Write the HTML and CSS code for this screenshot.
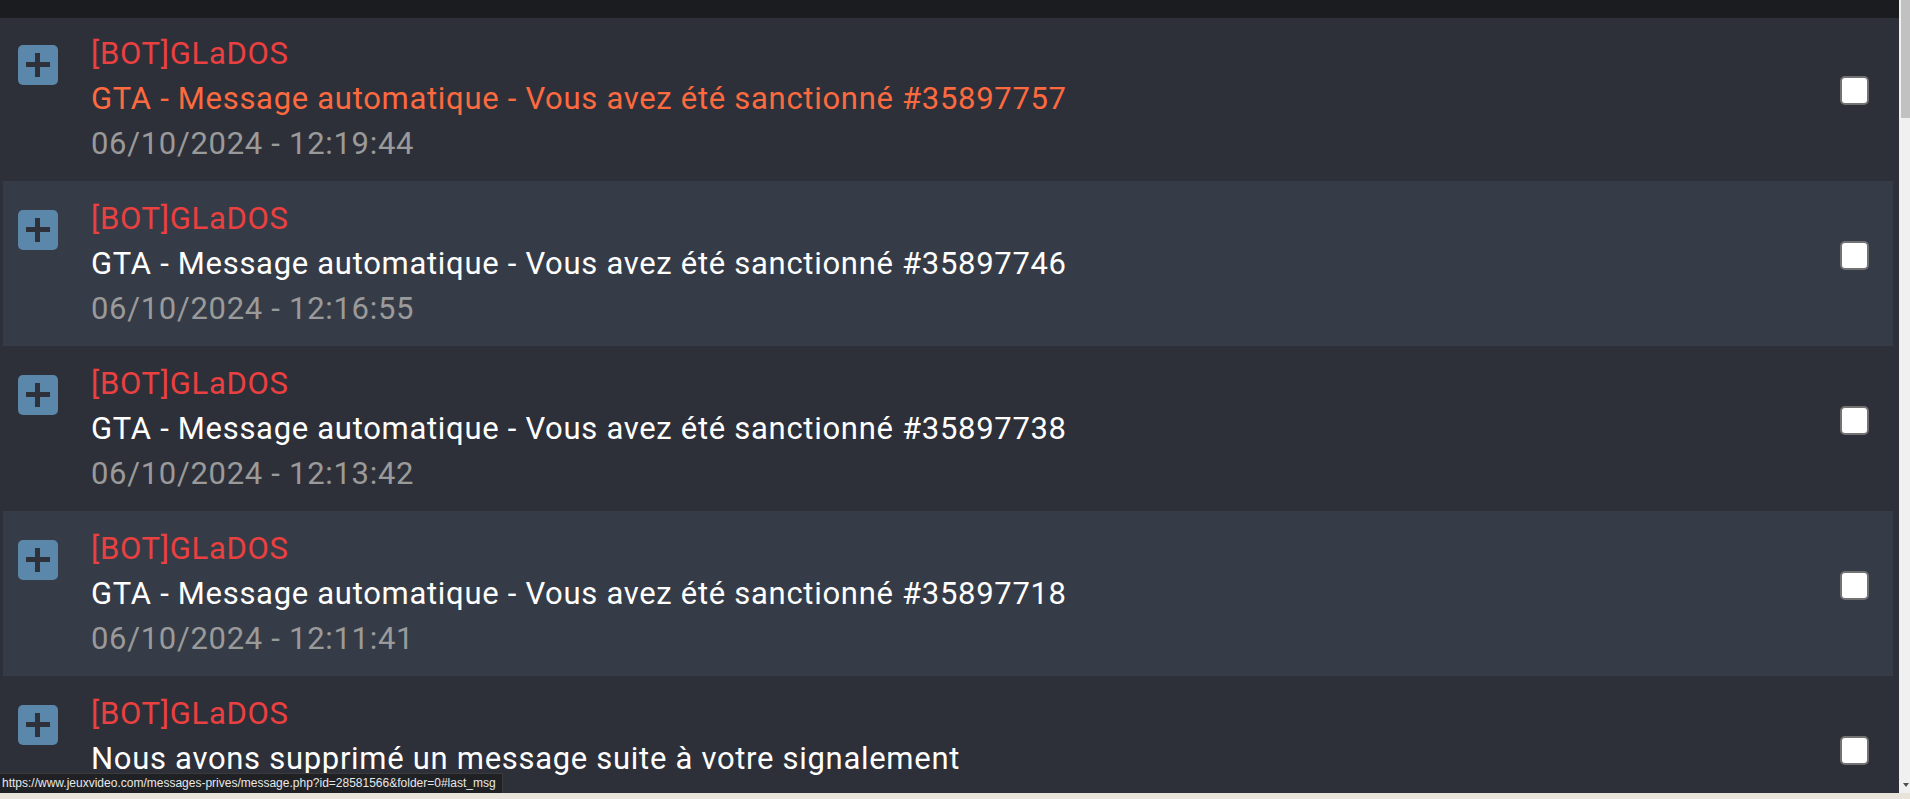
FILE: index.html
```html
<!DOCTYPE html>
<html lang="fr">
<head>
    <meta charset="UTF-8">
    <meta name="viewport" content="width=device-width, initial-scale=1.0">
    <title>Messages privés</title>
    <link rel="stylesheet" href="styles.css">
</head>
<body>
    <div class="screen">
        <div class="viewport">
            <div class="page">
                <div class="topbar"></div>

                <!-- Liste des messages privés -->
                <ul class="msg-list">
                    <li class="msg unread">
                        <span class="msg-toggle"></span>
                        <div class="msg-body">
                            <div class="msg-author">[BOT]GLaDOS</div>
                            <div class="msg-subject">GTA - Message automatique - Vous avez été sanctionné #35897757</div>
                            <div class="msg-date">06/10/2024 - 12:19:44</div>
                        </div>
                        <input type="checkbox" class="msg-check">
                    </li>
                    <li class="msg">
                        <span class="msg-toggle"></span>
                        <div class="msg-body">
                            <div class="msg-author">[BOT]GLaDOS</div>
                            <div class="msg-subject">GTA - Message automatique - Vous avez été sanctionné #35897746</div>
                            <div class="msg-date">06/10/2024 - 12:16:55</div>
                        </div>
                        <input type="checkbox" class="msg-check">
                    </li>
                    <li class="msg">
                        <span class="msg-toggle"></span>
                        <div class="msg-body">
                            <div class="msg-author">[BOT]GLaDOS</div>
                            <div class="msg-subject">GTA - Message automatique - Vous avez été sanctionné #35897738</div>
                            <div class="msg-date">06/10/2024 - 12:13:42</div>
                        </div>
                        <input type="checkbox" class="msg-check">
                    </li>
                    <li class="msg">
                        <span class="msg-toggle"></span>
                        <div class="msg-body">
                            <div class="msg-author">[BOT]GLaDOS</div>
                            <div class="msg-subject">GTA - Message automatique - Vous avez été sanctionné #35897718</div>
                            <div class="msg-date">06/10/2024 - 12:11:41</div>
                        </div>
                        <input type="checkbox" class="msg-check">
                    </li>
                    <li class="msg">
                        <span class="msg-toggle"></span>
                        <div class="msg-body">
                            <div class="msg-author">[BOT]GLaDOS</div>
                            <div class="msg-subject">Nous avons supprimé un message suite à votre signalement</div>
                            <div class="msg-date">06/10/2024 - 11:58:12</div>
                        </div>
                        <input type="checkbox" class="msg-check">
                    </li>
                </ul>
            </div>

            <!-- fake scrollbar -->
            <div class="scrollbar">
                <div class="scroll-thumb"></div>
                <div class="scroll-arrow"></div>
            </div>
        </div>
        <div class="bottom-strip"></div>

        <div class="status-url">https://www.jeuxvideo.com/messages-prives/message.php?id=28581566&amp;folder=0#last_msg</div>
    </div>
</body>
</html>
```

FILE: styles.css
```css
/* Base */
body {
    margin: 0;
    padding: 0;
    background-color: #2e3039;
    font-family: Roboto, 'Noto Sans', sans-serif;
    overflow: hidden;
}

.screen {
    position: relative;
    width: 1910px;
    height: 799px;
    display: flex;
    flex-direction: column;
}

.viewport {
    display: flex;
    height: 793px;
    overflow: hidden;
}

.page {
    flex: 1;
    background-color: #2e3039;
    overflow: hidden;
}

.topbar {
    height: 18px;
    background-color: #1b1c1f;
}

/* Message list */
.msg-list {
    list-style: none;
    margin: 0;
    padding: 0 6px 0 3px;
}

.msg {
    display: flex;
    align-items: flex-start;
    height: 165px;
    box-sizing: border-box;
    padding: 15px 24px 15px 15px;
    background-color: #2e3039;
}

.msg:first-child {
    height: 163px;
    padding-top: 13px;
}

.msg:nth-child(even) {
    background-color: #363c47;
}

.msg-toggle {
    position: relative;
    flex: none;
    width: 40px;
    height: 40px;
    margin-top: 14px;
    margin-right: 33px;
    border-radius: 5px;
    background-color: #5b87ab;
}

/* plus sign */
.msg-toggle::before,
.msg-toggle::after {
    content: '';
    position: absolute;
    background-color: #2e3139;
}

.msg-toggle::before {
    left: 8px;
    top: 17px;
    width: 24px;
    height: 5px;
}

.msg-toggle::after {
    left: 17px;
    top: 8px;
    width: 5px;
    height: 24px;
}

.msg-body {
    flex: 1;
    font-size: 31px;
    line-height: 45px;
    letter-spacing: 0.7px;
}

.msg-author {
    color: #ea4040;
}

.msg-subject {
    color: #ffffff;
}

.msg.unread .msg-subject {
    color: #fd6a3f;
}

.msg-date {
    color: #9a9a9a;
}

.msg-check {
    appearance: none;
    -webkit-appearance: none;
    flex: none;
    width: 29px;
    height: 29px;
    margin: 45px 0 0 0;
    box-sizing: border-box;
    border: 2px solid #727272;
    border-radius: 5px;
    background-color: #ffffff;
}

/* Scrollbar + window bits */
.scrollbar {
    position: relative;
    width: 11px;
    background-color: #f0f0f0;
}

.scroll-thumb {
    margin-left: 2px;
    height: 118px;
    background-color: #c1c1c1;
}

.scroll-arrow {
    position: absolute;
    left: 4px;
    bottom: 6px;
    width: 0;
    height: 0;
    border-left: 3px solid transparent;
    border-right: 3px solid transparent;
    border-top: 4px solid #505050;
}

.bottom-strip {
    flex: 1;
    background-color: #e9e4d9;
}

.status-url {
    position: absolute;
    left: 0;
    bottom: 6px;
    height: 20px;
    padding: 0 6px 0 2px;
    box-sizing: border-box;
    background-color: #202124;
    border-top: 1px solid #3a3a3a;
    border-right: 1px solid #3a3a3a;
    color: #e8e8e8;
    font-family: 'Liberation Sans', Arial, sans-serif;
    font-size: 12px;
    line-height: 19px;
    white-space: nowrap;
}
```
